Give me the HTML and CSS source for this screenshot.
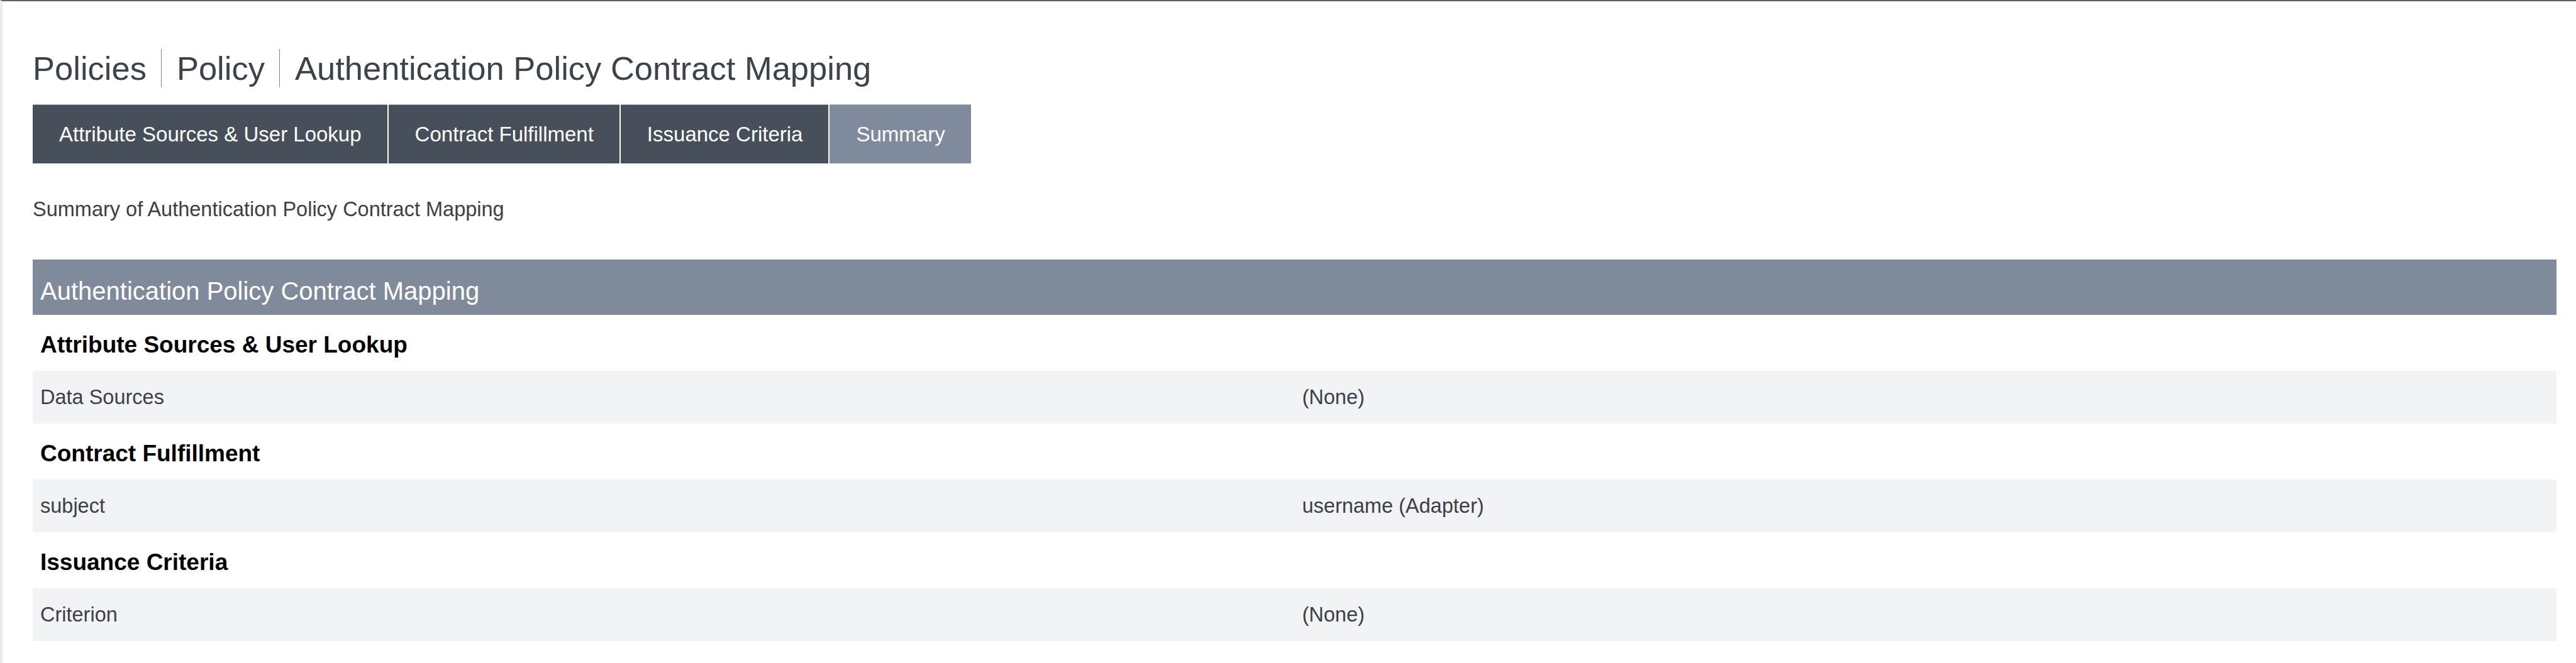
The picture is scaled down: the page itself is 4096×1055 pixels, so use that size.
FILE: index.html
```html
<!DOCTYPE html>
<html lang="en">
<head>
    <meta charset="UTF-8">
    <meta name="viewport" content="width=device-width, initial-scale=1.0">
    <title>Authentication Policy Contract Mapping</title>
    <link rel="stylesheet" href="styles.css">
</head>
<body>
    <div class="page">
        <h1 class="breadcrumb">
            <span>Policies</span>
            <span class="crumb">Policy</span>
            <span class="crumb">Authentication Policy Contract Mapping</span>
        </h1>
        <div class="tabs">
            <div class="tab">Attribute Sources &amp; User Lookup</div>
            <div class="tab">Contract Fulfillment</div>
            <div class="tab">Issuance Criteria</div>
            <div class="tab active">Summary</div>
        </div>
        <p class="intro">Summary of Authentication Policy Contract Mapping</p>
        <div class="summary">
            <div class="summary-title">Authentication Policy Contract Mapping</div>
            <div class="section-title">Attribute Sources &amp; User Lookup</div>
            <div class="row">
                <div class="cell">Data Sources</div>
                <div class="cell">(None)</div>
            </div>
            <div class="section-title">Contract Fulfillment</div>
            <div class="row">
                <div class="cell">subject</div>
                <div class="cell">username (Adapter)</div>
            </div>
            <div class="section-title">Issuance Criteria</div>
            <div class="row">
                <div class="cell">Criterion</div>
                <div class="cell">(None)</div>
            </div>
        </div>
    </div>
</body>
</html>
```

FILE: styles.css
```css
body {
    font-family: "Liberation Sans", Arial, sans-serif;
    background-color: #fff;
    margin: 0;
    border-top: 2px solid #5a6069;
    border-left: 4px solid #e9eaec;
    min-height: 100vh;
    box-sizing: border-box;
}
.page {
    padding: 0 31px 0 48px;
}
.breadcrumb {
    display: flex;
    margin: 76px 0 27px 0;
    font-size: 52.5px;
    font-weight: normal;
    color: #3d434a;
}
.crumb {
    border-left: 1px solid #7d8288;
    margin-left: 23px;
    padding-left: 24px;
}
.tabs {
    display: flex;
    gap: 2px;
}
.tab {
    background-color: #47505a;
    color: #fff;
    font-size: 33px;
    line-height: 93px;
    padding: 0 41px 0 42px;
    border-top: 1px solid #a9b0b8;
}
.tab.active {
    background-color: #7f8b9c;
}
.intro {
    margin: 55px 0 61px 0;
    font-size: 32.5px;
    color: #3b4048;
}
.summary-title {
    background-color: #7f8b9b;
    color: #fff;
    font-size: 40px;
    line-height: 46px;
    padding: 27px 12px 15px 12px;
}
.section-title {
    font-size: 37px;
    font-weight: bold;
    color: #000;
    line-height: 42px;
    padding: 27px 12px 20px 12px;
}
.row {
    display: flex;
    background-color: #f2f3f5;
    font-size: 32.5px;
    line-height: 38px;
    color: #3b4048;
}
.cell {
    width: 50%;
    padding: 23px 12px;
}
```
